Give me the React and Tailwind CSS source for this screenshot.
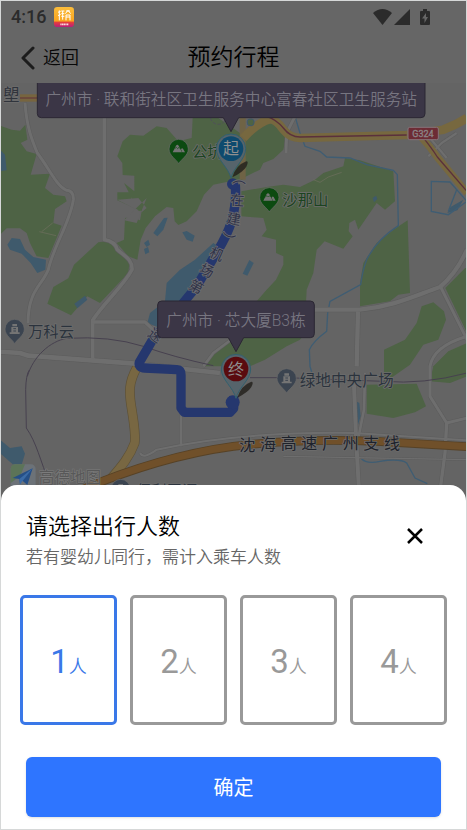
import { useState } from "react";

const LAND = "#646464";
const GREEN = "#4e6345";
const WATER = "#3f5a6c";
const ROAD = "#6e6e6e";
const ROAD_EDGE = "#5c5c5c";
const CALLOUT = "#3b3646";

const greens = [
  "M0 128 L35 140 L60 143 L76 125 L82 170 L62 180 L80 205 L110 213 L92 275 L150 272 L135 315 L160 335 L195 340 L200 355 L165 378 L160 420 L185 428 L170 465 L145 525 L110 520 L90 480 L80 450 L60 436 L20 436 L0 455 Z",
  "M352 220 L368 175 L390 155 L430 158 L470 130 L500 135 L535 175 L575 165 L578 105 L655 105 L720 150 L728 290 L690 295 L640 305 L612 335 L590 385 L560 415 L535 426 L524 415 L520 375 L500 372 L465 400 L437 435 L422 470 L412 530 L385 520 L350 480 L372 470 L375 405 L392 403 L420 412 L425 385 L352 352 L352 328 L390 328 L395 350 L440 340 L468 325 L470 300 L456 283 L468 262 L482 275 L494 310 L480 340 L440 375 L415 385 L372 300 L403 325 L403 278 L368 276 L367 240 Z",
  "M295 478 L325 474 L350 500 L388 540 L385 570 L300 660 L262 640 L213 697 L142 662 L160 612 L205 586 L222 545 Z",
  "M735 165 L770 135 L810 120 L845 130 L858 160 L850 200 L820 228 L790 240 L780 260 L735 282 Z",
  "M724 325 L800 312 L850 305 L900 312 L945 290 L970 270 L1030 250 L1035 225 L1080 232 L1180 265 L1185 355 L1155 380 L1130 360 L1075 440 L1065 410 L1048 420 L1046 445 L1058 460 L1030 497 L974 475 L950 500 L940 570 L920 620 L918 660 L945 700 L900 770 L860 790 L795 830 L750 850 L700 850 L700 720 L770 655 L800 620 L828 590 L850 545 L850 520 L828 510 L828 470 L785 460 L800 440 L790 405 L724 400 Z",
  "M1223 412 L1230 630 L1195 635 L1170 655 L1080 670 L1080 600 L1090 540 L1130 480 L1180 440 Z",
  "M1152 800 L1215 770 L1250 720 L1265 670 L1300 658 L1332 685 L1338 710 L1315 770 L1270 785 L1230 845 L1152 900 Z",
  "M1401 550 L1401 750 L1336 615 Z",
  "M1401 780 L1345 805 L1300 850 L1290 895 L1350 900 L1401 880 Z",
  "M1100 905 L1250 902 L1278 970 L1245 988 L1180 1005 L1100 992 Z",
  "M612 850 L640 810 L690 770 L720 850 Z",
];

const waters = [
  "M22 485 L35 465 L60 468 L75 500 L100 522 L138 530 L136 560 L112 570 L92 540 L65 512 L30 500 Z",
  "M0 200 L15 215 L20 262 L0 264 Z",
  "M500 600 L540 560 L585 530 L640 480 L655 490 L600 590 L540 680 L480 735 L442 720 L450 690 L495 655 Z",
  "M492 405 L503 404 L490 440 L472 460 L460 450 Z",
  "M432 480 L445 470 L450 485 L440 492 Z",
  "M432 498 L444 492 L448 508 L436 514 Z",
  "M547 448 L560 444 L584 458 L578 476 L560 470 Z",
  "M748 531 L761 540 L742 578 L728 572 Z",
  "M223 662 L255 638 L262 650 L232 676 Z",
  "M1118 345 L1128 338 L1132 348 L1122 358 Z",
  "M0 1070 L30 1095 L65 1090 L75 1112 L65 1145 L45 1150 L0 1110 Z",
  "M1068 955 L1078 960 L1082 1000 L1074 1025 L1068 1000 Z",
  "M1342 390 L1352 372 L1390 350 L1372 382 Z",
];

const roads = [
  { d: "M75 60 C80 130 95 170 112 210 C150 260 170 310 200 322 Q222 324 220 350 C210 420 160 490 145 560 C125 610 85 620 84 720", w: 9 },
  { d: "M313 100 L313 470 Q345 475 352 500 C375 520 398 530 396 560 C370 610 310 660 278 712 L278 830", w: 11 },
  { d: "M278 717 L435 717 L470 750", w: 10 },
  { d: "M0 806 L60 810 L85 818 L405 842 L660 870", w: 14 },
  { d: "M543 1090 L543 900", w: 8 },
  { d: "M610 850 L640 810 L700 765", w: 8 },
  { d: "M940 680 L1080 680 C1180 670 1240 640 1320 612 Q1370 570 1401 500", w: 13 },
  { d: "M1074 685 L1070 850", w: 13 },
  { d: "M1322 612 L1401 770", w: 9 },
  { d: "M1401 760 Q1300 790 1290 850 L1290 940 L1340 1020 L1401 1005", w: 9 },
  { d: "M1340 1020 L1335 1110 L1318 1240", w: 10 },
  { d: "M1061 880 L1068 1060 L1078 1240", w: 12 },
  { d: "M1095 870 L1092 980 L1072 1080", w: 8 },
  { d: "M858 210 L860 150 L885 100", w: 9 },
  { d: "M420 1110 Q430 1130 470 1100 Q720 1045 1061 1050 L1401 1072", w: 6 },
  { d: "M850 1120 L1401 1130", w: 4 },
  { d: "M1285 220 L1325 180 L1370 150", w: 7 },
  { d: "M1290 165 L1340 225", w: 7 },
];

const streams = [
  "M885 100 L900 150 L915 190 L960 205 L980 222 L1050 225 L1100 245 L1180 262 L1192 275 L1195 428 Q1130 470 1100 530 Q1088 560 1082 605 L990 655 L983 690 L980 745 Q940 775 928 800 L930 850 L935 867",
  "M1294 385 L1294 295 L1350 297 L1370 320 L1401 355 L1345 395 Z",
  "M1370 320 L1345 385",
  "M1082 1125 Q1100 1145 1140 1135 Q1200 1125 1220 1140 L1245 1185 L1282 1202",
];

const routeGlyphs = [
  { c: "（", x: 716, y: 284, r: 92 },
  { c: "在", x: 712, y: 352, r: 4 },
  { c: "建", x: 701, y: 408, r: 10 },
  { c: "）", x: 683, y: 470, r: 106 },
  { c: "机", x: 650, y: 513, r: 24 },
  { c: "场", x: 620, y: 563, r: 28 },
  { c: "第", x: 588, y: 612, r: 30 },
  { c: "速", x: 466, y: 757, r: 36 },
];

function PlacePin({ x, y, kind }) {
  const fill = kind === "park" ? "#0c4a10" : "#3b4450";
  return (
    <g transform={`translate(${x} ${y})`}>
      <path d="M0 42 C-6 30 -29 18 -29 -2 A29 29 0 0 1 29 -2 C29 18 6 30 0 42 Z" fill={fill} stroke="#6a6a6a" strokeWidth="2" />
      {kind === "park" ? (
        <g>
          <path d="M-18 8 L-8 -12 Q-4 -17 0 -12 L10 8 Z M11 8 L7 -1 Q10 -7 13 -3 L19 8 Z" fill="#747474" />
          <path d="M-12 -3 L-7 -7 L-3 -3 L1 -7 L4 -3" fill="none" stroke={fill} strokeWidth="2" />
        </g>
      ) : (
        <g fill="#747474">
          <path d="M-7 -17 H7 V-10 H-7 Z M-10 -8 H10 V12 H-10 Z M-15 8 H15 V13 H-15 Z" />
          <path d="M-4 -3 H4 M-4 4 H4" stroke={fill} strokeWidth="3" />
        </g>
      )}
    </g>
  );
}

function PlaceLabel({ x, y, size = 46, color, children }) {
  return (
    <text x={x} y={y} fontSize={size} fill={color} stroke="#6c6c6c" strokeWidth="5" strokeLinejoin="round" paintOrder="stroke">
      {children}
    </text>
  );
}

function EndPin({ x, y, label, fill }) {
  return (
    <g transform={`translate(${x} ${y})`}>
      <path d="M4 86 Q14 50 46 38 Q54 38 46 54 Q36 70 4 86 Z" fill="#24221d" opacity="0.85" />
      <path d="M0 88 C-8 55 -44 32 -44 0 A44 44 0 0 1 44 0 C44 32 8 55 0 88 Z" fill="#56646b" stroke="#32606e" strokeWidth="3" />
      <circle r="37" fill={fill} />
      <text y="17" fontSize="48" textAnchor="middle" fill="#8f8f8f">{label}</text>
    </g>
  );
}

function Callout({ x, y, width, height, tip, children }) {
  return (
    <g>
      <path
        d={`M${x + 12} ${y} H${x + width - 12} Q${x + width} ${y} ${x + width} ${y + 12} V${y + height - 12} Q${x + width} ${y + height} ${x + width - 12} ${y + height} H${tip + 23} L${tip} ${y + height + 42} L${tip - 23} ${y + height} H${x + 12} Q${x} ${y + height} ${x} ${y + height - 12} V${y + 12} Q${x} ${y} ${x + 12} ${y} Z`}
        fill={CALLOUT}
        stroke="#2b2733"
        strokeWidth="3"
      />
      <text x={x + width / 2} y={y + height / 2 + 20} fontSize="47" textAnchor="middle" fill="#777580" className="font-[350]">{children}</text>
    </g>
  );
}

function TripMap() {
  return (
    <svg viewBox="3 0 1395 1242" preserveAspectRatio="xMidYMin slice" className="block w-full" role="img" aria-label="行程地图">
      <rect width="1401" height="1300" fill={LAND} />
      {greens.map((d) => <path key={d} d={d} fill={GREEN} />)}
      {waters.map((d) => <path key={d} d={d} fill={WATER} />)}
      {streams.map((d) => <path key={d} d={d} fill="none" stroke="#3f5d73" strokeWidth="4" />)}
      <path d="M352 350 L425 388 L440 375 L415 345 Z M372 412 L440 345 L410 420 Z" fill={LAND} />
      <g fill="none" strokeLinejoin="round">
        {roads.map((r) => <path key={r.d} d={r.d} stroke={ROAD_EDGE} strokeWidth={r.w + 3} />)}
        {roads.map((r) => <path key={r.d} d={r.d} stroke={ROAD} strokeWidth={r.w} />)}
        <path d="M940 290 L960 298 L985 282 L1025 268 M118 446 L168 458 M125 446 L158 420" stroke="#6f6f5f" strokeWidth="2" />
        <path d="M82 880 C100 820 150 775 200 766 Q330 758 430 790 Q520 822 640 848 M88 861 Q78 875 77 920 L79 1035 C110 1080 120 1130 150 1206" stroke="#47414f" strokeWidth="3" />
        <path d="M750 884 L860 884 Q1000 890 1150 895 Q1270 905 1401 870" stroke="#47414f" strokeWidth="3" />

        <path d="M60 45 H115" stroke="#77653f" strokeWidth="22" />
        <path d="M60 45 H115" stroke="#63303a" strokeWidth="3" />
        <path d="M728 95 V290" stroke="#6f6345" strokeWidth="18" />
        <path d="M730 165 Q770 120 810 108 Q830 110 850 140 Q870 165 900 165 L1220 156 L1330 140 Q1370 125 1401 105" stroke="#77683f" strokeWidth="26" />
        <path d="M1260 158 Q1290 190 1310 220 L1401 330" stroke="#77683f" strokeWidth="22" />
        <path d="M760 100 H800 Q830 110 850 135 Q870 162 900 162 L1220 156 M1265 158 Q1295 195 1312 222 L1401 325" stroke="#5b303c" strokeWidth="4" />
        <path d="M410 855 C385 900 388 930 393 965 C400 1010 408 1050 404 1080 C390 1120 365 1150 330 1190" stroke="#5d5137" strokeWidth="29" />
        <path d="M410 855 C385 900 388 930 393 965 C400 1010 408 1050 404 1080 C390 1120 365 1150 330 1190" stroke="#786742" strokeWidth="25" />
        <path d="M240 1222 Q480 1120 700 1090 Q900 1065 1130 1075 L1401 1091" stroke="#574226" strokeWidth="26" />
        <path d="M240 1222 Q480 1120 700 1090 Q900 1065 1130 1075 L1401 1091" stroke="#70502a" strokeWidth="21" />

        <path d="M706 305 Q710 360 695 415 Q680 460 655 500 L590 610 L455 775 L418 838 Q414 854 435 855 L530 860 Q543 861 543 876 V975 L553 988 H690 L701 976 V940" stroke="#25376e" strokeWidth="28" />
      </g>
      <circle cx="698" cy="303" r="17" fill="#25376e" />
      <circle cx="698" cy="958" r="21" fill="#25376e" />

      {routeGlyphs.map((g) => (
        <text key={g.c} transform={`translate(${g.x} ${g.y}) rotate(${g.r})`} y="15" fontSize="42" textAnchor="middle" fill="#303348" stroke="#6c6c70" strokeWidth="5" paintOrder="stroke">{g.c}</text>
      ))}

      <circle cx="655" cy="100" r="24" fill="none" stroke="#50505a" strokeWidth="3" strokeDasharray="10 5" />
      <rect x="742" y="108" width="20" height="20" rx="8" fill={GREEN} stroke="#3f5a6c" strokeWidth="3" />

      <PlaceLabel x={9} y={55} size={50} color="#30343c">塱</PlaceLabel>
      <PlacePin x={536} y={200} kind="park" />
      <PlaceLabel x={576} y={221} color="#1b4420">公坑</PlaceLabel>
      <PlacePin x={808} y={345} kind="park" />
      <PlaceLabel x={847} y={365} color="#1b4420">沙那山</PlaceLabel>
      <PlacePin x={44} y={740} kind="building" />
      <PlaceLabel x={84} y={761} color="#2b333d">万科云</PlaceLabel>
      <PlacePin x={860} y={888} kind="building" />
      <PlaceLabel x={899} y={909} size={47} color="#2b333d">绿地中央广场</PlaceLabel>
      {["沈", "海", "高", "速", "广", "州", "支", "线"].map((c, i) => (
        <PlaceLabel key={c} x={718 + i * 62} y={i === 0 ? 1104 : i === 1 ? 1100 : 1098} size={48} color="#1e222b">{c}</PlaceLabel>
      ))}
      <PlacePin x={362} y={1220} kind="building" />
      <PlaceLabel x={408} y={1238} color="#2b333d">保利天汇</PlaceLabel>

      <g>
        <rect x="1224" y="133" width="91" height="37" rx="5" fill="#6d2c35" stroke="#86747a" strokeWidth="3" />
        <text x="1269" y="161" fontSize="27" textAnchor="middle" fill="#8c8587" stroke="#8c8587" strokeWidth="1">G324</text>
      </g>

      <g>
        <rect x="32" y="1144" width="75" height="80" rx="14" fill="#6c7278" />
        <path d="M32 1170 V1158 Q32 1144 46 1144 H75 L60 1180 L32 1200 Z" fill="#5c7458" />
        <path d="M38 1185 L98 1156 L82 1206 L66 1192 L60 1204 L58 1188 Z" fill="#254f87" />
        <path d="M98 1156 L58 1188 L60 1204 Z" fill="#3b6ba6" />
        <text x="116" y="1200" fontSize="47" fill="#585858" stroke="#7c7c7c" strokeWidth="3" paintOrder="stroke">高德地图</text>
      </g>

      <EndPin x={693} y={197} label="起" fill="#0e4a6e" />
      <EndPin x={708} y={858} label="终" fill="#5a0b0e" />
      <Callout x={112} y={-14} width={1163} height={118} tip={693}>广州市 · 联和街社区卫生服务中心富春社区卫生服务站</Callout>
      <Callout x={473} y={654} width={470} height={110} tip={708}>广州市 · 芯大厦B3栋</Callout>
    </svg>
  );
}

function StatusBar() {
  return (
    <div className="flex h-8 items-center justify-between pr-9 pl-[10px]">
      <div className="flex items-center gap-2 text-[18px] leading-5 font-medium text-[#2b2b2b]">
        <span>4:16</span>
        <svg width="20" height="20" viewBox="0 0 60 60" aria-hidden="true">
          <defs>
            <linearGradient id="app" x1="0" y1="0" x2="0" y2="1">
              <stop offset="0" stopColor="#fbbd3c" />
              <stop offset="0.7" stopColor="#f9a51f" />
              <stop offset="0.76" stopColor="#e8403a" />
              <stop offset="1" stopColor="#b81d7c" />
            </linearGradient>
          </defs>
          <rect width="60" height="60" rx="10" fill="url(#app)" />
          <path d="M16 10 V40 M12 16 L20 13 M12 26 L20 22 M22 12 H31 M22 20 H31 M22 28 H31 M26 12 V38 M36 12 H48 M34 20 L42 10 L50 20 M36 24 H48 V30 H36 Z M36 30 V40 M48 30 V40" fill="none" stroke="#fff" strokeWidth="3" />
          <path d="M19 52 H44" stroke="#fbd9e0" strokeWidth="5" strokeDasharray="4 1" />
        </svg>
      </div>
      <svg width="57" height="16" viewBox="0 0 57 16" fill="#2b2b2b" aria-hidden="true">
        <path d="M0 4 Q9.500 -4 19 4 L9.500 16 Z" />
        <path d="M21 16 L37 0 V16 Z" />
        <path fillRule="evenodd" d="M50 0 H54 V2 H56 Q57 2 57 3 V15 Q57 16 56 16 H48 Q47 16 47 15 V3 Q47 2 48 2 H50 Z M53 4 L49 9.500 H51.500 V14 L55 8 H53 Z" />
      </svg>
    </div>
  );
}

export default function App() {
  const [count, setCount] = useState(1);
  return (
    <div className="flex min-h-screen flex-col overflow-hidden border border-[#d6d8d8] bg-[#666666] font-['Roboto','Noto_Sans_CJK_SC',sans-serif]">
      <StatusBar />
      <header className="grid h-[50px] grid-cols-[1fr_auto_1fr] items-center px-5">
        <button type="button" className="flex items-center gap-2 justify-self-start text-[18px] leading-6 font-[350] text-[#080808]">
          <svg width="14" height="24" viewBox="0 0 14 24" fill="none" stroke="#1c1c1c" strokeWidth="3" strokeLinecap="round" strokeLinejoin="round" aria-hidden="true">
            <path d="M12 2 L2 12 L12 22" />
          </svg>
          返回
        </button>
        <h1 className="text-[23px] leading-8 font-[350] text-black">预约行程</h1>
      </header>

      <main className="flex flex-1 flex-col">
        <TripMap />
        <section className="relative -mt-3 flex flex-1 flex-col rounded-t-2xl bg-white pt-[26px] pb-3">
          <div className="flex items-center justify-between pr-[43px] pl-[25px]">
            <div>
              <h2 className="text-[22px] leading-8 font-[350] text-black">请选择出行人数</h2>
              <p className="mt-0.5 text-[17px] leading-6 font-[350] text-[#666666]">若有婴幼儿同行，需计入乘车人数</p>
            </div>
            <button type="button" aria-label="关闭" className="mb-2">
              <svg width="16" height="16" viewBox="0 0 16 16" fill="none" stroke="#000" strokeWidth="2.500" aria-hidden="true">
                <path d="M1 1 L15 15 M15 1 L1 15" />
              </svg>
            </button>
          </div>

          <div role="radiogroup" aria-label="出行人数" className="mt-[26px] grid grid-cols-4 gap-[13px] px-[19px]">
            {[1, 2, 3, 4].map((n) => (
              <label
                key={n}
                className="flex h-[130px] cursor-pointer items-center justify-center rounded-[5px] border-3 border-[#999999] pt-1 text-[#999999] has-checked:border-[#3a78e8] has-checked:text-[#3a78e8]"
              >
                <input type="radio" name="people" value={n} checked={count === n} onChange={() => setCount(n)} className="sr-only" />
                <span className="flex items-baseline">
                  <span className="text-[33px] leading-10">{n}</span>
                  <span className="text-[18px] leading-6 font-[350]">人</span>
                </span>
              </label>
            ))}
          </div>

          <button type="button" className="mx-[25px] mt-8 h-[60px] rounded-md bg-[#2e75ff] pt-0.5 text-[20px] leading-7 text-white shadow-sm">
            确定
          </button>
        </section>
      </main>
    </div>
  );
}
